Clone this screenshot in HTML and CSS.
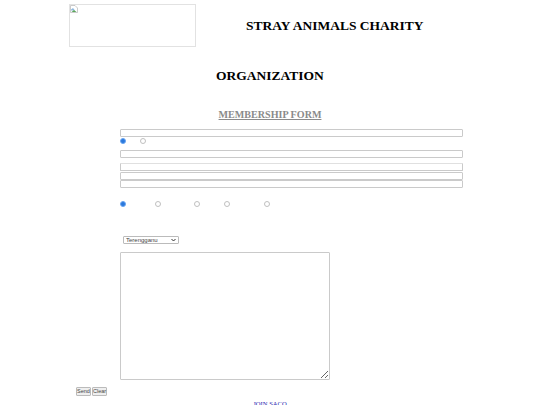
FILE: index.html
```html
<!DOCTYPE html>
<html lang="en">
<head>
<meta charset="utf-8">
<title>Membership Form</title>
<link rel="stylesheet" href="styles.css">
</head>
<body>
<header class="top">
  <div class="logo">
    <svg class="broken" viewBox="0 0 8 8" width="8" height="8" aria-hidden="true">
      <path d="M.5.5H5L7.5 3V7.5H.5Z" fill="#fff" stroke="#b5b5b5" stroke-width=".7"/>
      <path d="M1 4.5 3 3l2 2.5H1Z" fill="#8fb8de"/>
      <path d="M1.5 7 4 5l2.5 2Z" fill="#5aa65a"/>
    </svg>
  </div>
  <h1 class="title">STRAY ANIMALS CHARITY</h1>
</header>
<h1 class="org">ORGANIZATION</h1>
<h2 class="form-title">MEMBERSHIP FORM</h2>
<form class="form">
  <input class="field" type="text">
  <div class="radios two">
    <input type="radio" name="a" checked>
    <input type="radio" name="a">
  </div>
  <input class="field gap-a" type="text">
  <div class="stack">
    <input class="field first" type="text">
    <input class="field" type="text">
    <input class="field" type="text">
  </div>
  <div class="radios five">
    <input type="radio" name="b" checked>
    <input type="radio" name="b">
    <input type="radio" name="b">
    <input type="radio" name="b">
    <input type="radio" name="b">
  </div>
  <select class="state"><option>Terengganu</option></select>
  <textarea class="message"></textarea>
  <div class="buttons">
    <button type="submit">Send</button>
    <button type="reset">Clear</button>
  </div>
</form>
<footer class="foot"><a href="#">JOIN SACO</a></footer>
</body>
</html>
```
FILE: styles.css
```css
html, body { margin: 0; padding: 0; height: 405px; overflow: hidden; background: #fff; }
body { font-family: "Liberation Serif", serif; color: #000; }
.top { display: flex; padding: 4px 0 0 69px; height: 43px; }
.logo { width: 127px; height: 43px; box-sizing: border-box; border: 1px solid #e2e2e2; line-height: 0; }
.broken { display: block; margin: 0; }
.title { margin: 14px 0 0 50px; font-size: 13.5px; line-height: 16px; font-weight: bold; white-space: nowrap; }
.org { margin: 21px 0 0; text-align: center; font-size: 13.5px; line-height: 16px; font-weight: bold; }
.form-title { margin: 24px 0 0; text-align: center; font-size: 10.1px; line-height: 13px; font-weight: bold; color: #8a8a8a; text-decoration: underline; }
.form { display: block; padding: 8px 0 0 120px; }
.field { display: block; box-sizing: border-box; width: 343px; height: 8px; margin: 0; padding: 0; border: 1px solid #cacaca; border-radius: 1px; background: #fff; }
.radios { display: flex; align-items: center; height: 6px; }
.radios input { appearance: none; box-sizing: border-box; width: 6px; height: 6px; margin: 0; flex: none; border: 1px solid #c0c0c0; border-radius: 50%; background: #fff; }
.radios input:checked { border-color: #6aa6f2; background: #2a78dc; }
.two { margin: 1px 0 0; gap: 14px; }
.gap-a { margin-top: 6px; }
.stack { margin-top: 5px; display: flex; flex-direction: column; }
.first { margin-bottom: 1px; border-top-color: #e0e0e0; }
.five { margin-top: 13px; }
.five input:nth-child(2) { margin-left: 29px; }
.five input:nth-child(3) { margin-left: 33px; }
.five input:nth-child(4) { margin-left: 24px; }
.five input:nth-child(5) { margin-left: 34px; }
.state { appearance: none; display: block; box-sizing: border-box; margin: 29px 0 0 3px; width: 56px; height: 8px; padding: 0 0 0 2px; border: 1px solid #bbb; border-radius: 1px; background: #fff url("data:image/svg+xml,%3Csvg xmlns='http://www.w3.org/2000/svg' width='5' height='4'%3E%3Cpath d='M.5 1 2.5 3 4.5 1' fill='none' stroke='%23333' stroke-width='1'/%3E%3C/svg%3E") no-repeat right 2px center; color: #444; font-family: "Liberation Sans", sans-serif; font-size: 6px; line-height: 6px; }
.message { display: block; box-sizing: border-box; width: 210px; height: 128px; margin: 8px 0 0; padding: 0; border: 1px solid #cacaca; border-radius: 1px; background: #fff; }
.buttons { display: flex; gap: 1px; margin: 7px 0 0 -44px; }
.buttons button { box-sizing: border-box; width: 15px; height: 9px; padding: 0; margin: 0; border: 1px solid #bbb; border-radius: 1px; background: #efefef; color: #444; font-family: "Liberation Sans", sans-serif; font-size: 5.5px; line-height: 5px; }
.foot { margin-top: 4px; text-align: center; font-size: 6.6px; line-height: 8px; }
.foot a { color: #2a1fb0; }
```
